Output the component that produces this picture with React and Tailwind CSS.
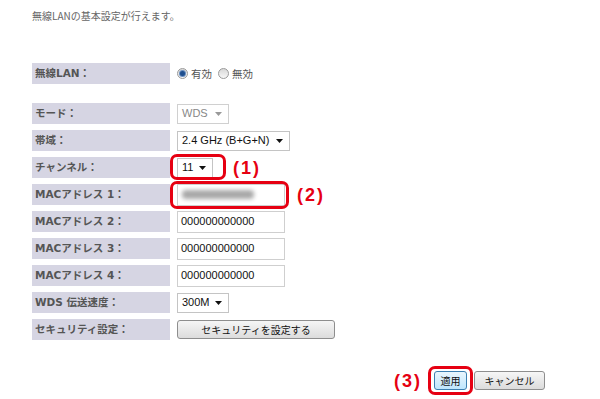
import React from "react";

const JP = { fontFamily: '"DejaVu Sans", "Noto Sans CJK JP", sans-serif' };
const JPS = { fontFamily: '"Noto Sans CJK JP", sans-serif' };
const AR = { fontFamily: '"Liberation Sans", "Noto Sans CJK JP", sans-serif' };

function Arrow({ color = "#111" }) {
  return (
    <svg width="7" height="4" viewBox="0 0 7 4" className="shrink-0">
      <polygon points="0,0 7,0 3.5,4" fill={color} />
    </svg>
  );
}

function Label({ children }) {
  return (
    <div
      className="w-[138px] h-[21px] bg-[#d6d5e3] pl-[3px] flex items-center text-[10.5px] font-bold text-[#555] shrink-0 leading-none"
      style={JP}
    >
      {children}
    </div>
  );
}

function Select({ w, text, disabled }) {
  return (
    <div
      className={`h-[20px] ${w} border ${disabled ? "border-[#d0d0d0] text-[#888]" : "border-[#c4c4c4] text-[#111]"} bg-white flex items-center justify-between pl-[4px] pr-[6px] text-[11px] leading-none`}
      style={AR}
    >
      <span>{text}</span>
      <Arrow color={disabled ? "#999" : "#111"} />
    </div>
  );
}

function TextInput({ children }) {
  return (
    <div
      className="h-[22px] w-[108px] border border-[#cfcfcf] bg-white flex items-center pl-[3px] text-[11px] text-[#111] leading-none"
      style={AR}
    >
      {children}
    </div>
  );
}

function Radio({ checked }) {
  return (
    <div className="w-[11px] h-[11px] rounded-full border border-[#9a9a9a] bg-gradient-to-b from-[#d8d8d8] to-[#f8f8f8] flex items-center justify-center">
      {checked && <div className="w-[5px] h-[5px] rounded-full bg-[#1f4f8f] ring-1 ring-[#6a8fc0]" />}
    </div>
  );
}

function Row({ label, children }) {
  return (
    <div className="flex items-center gap-[7px] h-[21px]">
      <Label>{label}</Label>
      <div className="flex items-center">{children}</div>
    </div>
  );
}

function Mark({ children, className = "" }) {
  return (
    <span
      className={`text-[18px] font-bold text-[#e60012] tracking-[2px] leading-none ${className}`}
      style={AR}
    >
      {children}
    </span>
  );
}

export default function App() {
  return (
    <div className="w-[600px] h-[399px] bg-white overflow-hidden relative">
      <div className="pl-[32px] pt-[10px]">
        <p className="text-[10px] text-[#666] leading-[12px]" style={JPS}>
          無線LANの基本設定が行えます。
        </p>

        <div className="mt-[41px]">
          <Row label="無線LAN：">
            <div className="flex items-center gap-[3px] text-[10.5px] text-[#555]" style={JPS}>
              <Radio checked />
              <span className="mr-[3px]">有効</span>
              <Radio />
              <span>無効</span>
            </div>
          </Row>
        </div>

        <div className="mt-[19px] flex flex-col gap-[6px]">
          <Row label="モード：">
            <Select w="w-[52px]" text="WDS" disabled />
          </Row>
          <Row label="帯域：">
            <Select w="w-[113px]" text="2.4 GHz (B+G+N)" />
          </Row>
          <Row label="チャンネル：">
            <div className="relative flex items-center">
              <Select w="w-[36px]" text="11" />
              <div className="absolute left-[-7px] top-[-4px] w-[56px] h-[26px] border-[3px] border-[#e60012] rounded-[7px]" />
              <Mark className="ml-[20px]">(1)</Mark>
            </div>
          </Row>
          <Row label="MACアドレス 1：">
            <div className="relative flex items-center">
              <TextInput>
                <div className="w-[72px] h-[9px] bg-[#a8a8a8] rounded-[4px] blur-[2px] ml-[1px]" />
              </TextInput>
              <div className="absolute left-[-7px] top-[-3px] w-[119px] h-[28px] border-[3px] border-[#e60012] rounded-[7px]" />
              <Mark className="ml-[12px]">(2)</Mark>
            </div>
          </Row>
          <Row label="MACアドレス 2：">
            <TextInput>000000000000</TextInput>
          </Row>
          <Row label="MACアドレス 3：">
            <TextInput>000000000000</TextInput>
          </Row>
          <Row label="MACアドレス 4：">
            <TextInput>000000000000</TextInput>
          </Row>
          <Row label="WDS 伝送速度：">
            <Select w="w-[52px]" text="300M" />
          </Row>
          <Row label="セキュリティ設定：">
            <div
              className="h-[19px] w-[158px] border border-[#8e8e8e] rounded-[3px] bg-gradient-to-b from-[#f6f6f6] to-[#dcdcdc] flex items-center justify-center text-[10px] text-[#111] leading-none"
              style={JPS}
            >
              セキュリティを設定する
            </div>
          </Row>
        </div>
      </div>

      <div className="mt-[31px] flex items-center justify-end pr-[55px]">
        <Mark className="mr-[12px]">(3)</Mark>
        <div className="relative">
          <div
            className="h-[19px] w-[33px] border border-[#3c7fb1] rounded-[3px] bg-gradient-to-b from-[#eaf6fd] to-[#bee6fd] flex items-center justify-center text-[10px] text-[#111] leading-none"
            style={JPS}
          >
            適用
          </div>
          <div className="absolute left-[-6px] top-[-5px] w-[45px] h-[29px] border-[3px] border-[#e60012] rounded-[7px]" />
        </div>
        <div
          className="ml-[7px] h-[19px] w-[71px] border border-[#8e8e8e] rounded-[3px] bg-gradient-to-b from-[#f6f6f6] to-[#dcdcdc] flex items-center justify-center text-[10px] text-[#111] leading-none"
          style={JPS}
        >
          キャンセル
        </div>
      </div>
    </div>
  );
}
